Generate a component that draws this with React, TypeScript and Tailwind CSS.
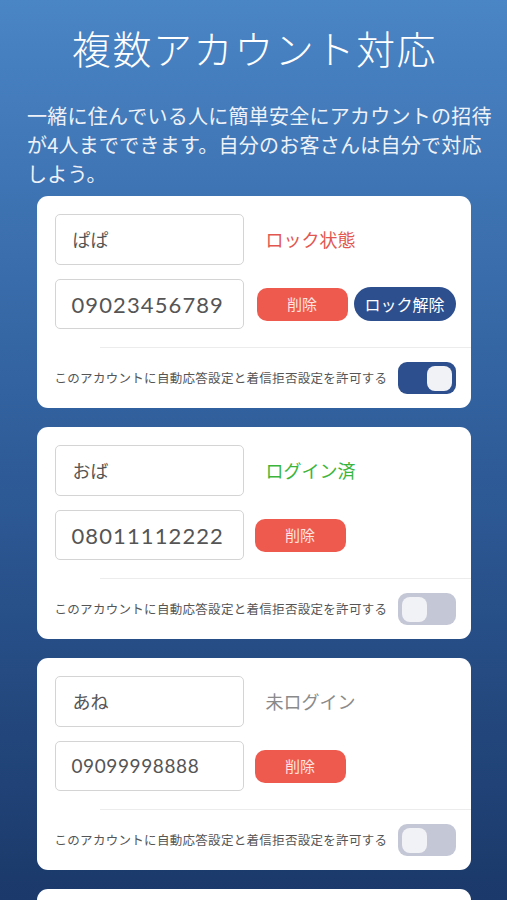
import React from "react";

const JP = { fontFamily: '"Noto Sans CJK JP", "Noto Sans", sans-serif' };
const NUM = { fontFamily: 'Lato, "Noto Sans CJK JP", sans-serif' };

type Acc = {
  name: string;
  phone: string;
  phoneSize: string;
  status: string;
  statusColor: string;
  lock?: boolean;
  on: boolean;
};

const accounts: Acc[] = [
  { name: "ぱぱ", phone: "09023456789", phoneSize: "text-[22px] tracking-[1.1px]", status: "ロック状態", statusColor: "text-[#e2574f]", lock: true, on: true },
  { name: "おば", phone: "08011112222", phoneSize: "text-[22px] tracking-[1.1px]", status: "ログイン済", statusColor: "text-[#3cb53c]", on: false },
  { name: "あね", phone: "09099998888", phoneSize: "text-[19px] tracking-[0.6px]", status: "未ログイン", statusColor: "text-[#8a8a8a]", on: false },
];

function Toggle({ on }: { on: boolean }) {
  return (
    <div
      className={`w-[58px] h-[32px] rounded-[9px] flex items-center px-[4px] ${
        on ? "bg-[#2d4f8e] justify-end" : "bg-[#c4c7d6] justify-start"
      }`}
    >
      <div className="w-[25px] h-[25px] rounded-[8px] bg-[#f1f2f6]" />
    </div>
  );
}

function Card({ a }: { a: Acc }) {
  return (
    <div className="w-[434px] h-[212px] shrink-0 bg-white rounded-[11px] pt-[18px] flex flex-col">
      <div className="flex items-center pl-[18px]">
        <div className="w-[189px] h-[51px] border border-[#d4d4d4] rounded-[5px] flex items-center pl-[17px] text-[18px] text-[#555]" style={JP}>
          {a.name}
        </div>
        <div className={`ml-[22px] text-[18px] ${a.statusColor}`} style={JP}>
          {a.status}
        </div>
      </div>
      <div className="flex items-center pl-[18px] mt-[14px]">
        <div className={`w-[189px] h-[50px] border border-[#d4d4d4] rounded-[5px] flex items-center pl-[16px] text-[#555] ${a.phoneSize}`} style={NUM}>
          {a.phone}
        </div>
        <div className={`${a.lock ? "ml-[13px]" : "ml-[11px]"} w-[91px] h-[33px] rounded-[10px] bg-[#ef5a4f] flex items-center justify-center text-[15px] text-[#fde3e0]`} style={JP}>
          削除
        </div>
        {a.lock && (
          <div className="ml-[6px] w-[102px] h-[34px] rounded-full bg-[#2d4f8e] flex items-center justify-center text-[16px] text-white" style={JP}>
            ロック解除
          </div>
        )}
      </div>
      <div className="ml-[63px] mt-[18px] h-px bg-[#ececec]" />
      <div className="flex items-center justify-between pl-[18px] pr-[15px] mt-[14px]">
        <div className="text-[12.5px] text-[#555] tracking-[0.3px]" style={JP}>
          このアカウントに自動応答設定と着信拒否設定を許可する
        </div>
        <Toggle on={a.on} />
      </div>
    </div>
  );
}

export default function App() {
  return (
    <div className="w-full h-[900px] overflow-hidden bg-gradient-to-b from-[#4a85c6] via-[#2f5d9a] to-[#1b396a] flex flex-col">
      <h1 className="text-center text-white text-[39px] leading-[48px] mt-[23px] pl-[2px] font-light tracking-[1.6px]" style={JP}>
        複数アカウント対応
      </h1>
      <p className="text-[#eef2f8] text-[20px] leading-[29px] pl-[27px] pr-[10px] mt-[30px] tracking-[0.25px]" style={JP}>
        一緒に住んでいる人に簡単安全にアカウントの招待が4人までできます。自分のお客さんは自分で対応しよう。
      </p>
      <div className="flex flex-col items-center gap-[19px] mt-[8px]">
        {accounts.map((a) => (
          <Card key={a.name} a={a} />
        ))}
        <div className="w-[434px] h-[212px] shrink-0 bg-white rounded-[11px]" />
      </div>
    </div>
  );
}
